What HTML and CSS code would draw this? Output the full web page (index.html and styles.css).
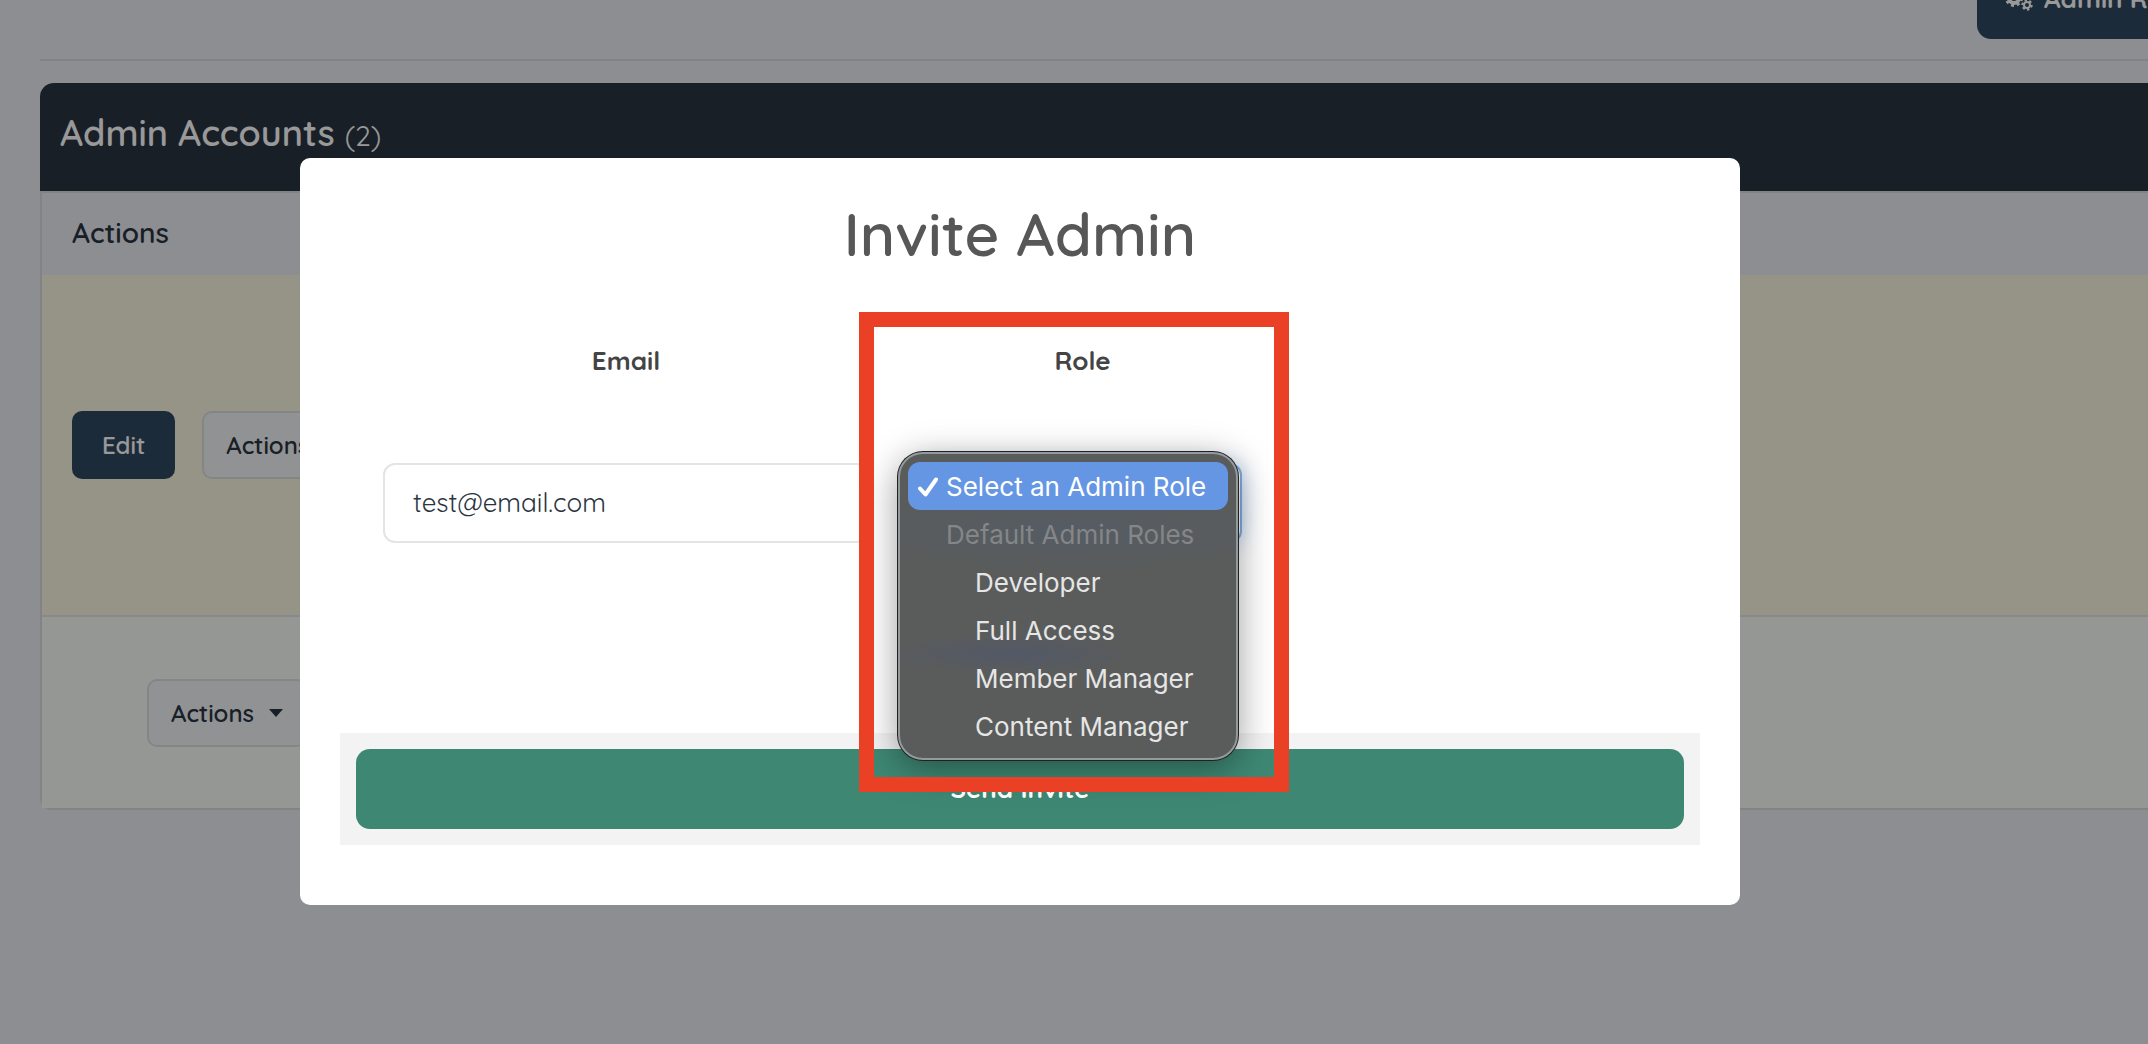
FILE: index.html
```html
<!DOCTYPE html>
<html lang="en">
<head>
<meta charset="utf-8">
<title>Admin Accounts</title>
<link rel="stylesheet" href="styles.css">
</head>
<body>
<div class="page">
  <header class="topbar">
    <button class="btn-roles" type="button">
      <svg class="icon-cogs" viewBox="0 0 30 30" aria-hidden="true">
        <circle class="gear" cx="9" cy="15" r="5"/>
        <circle class="teeth" cx="9" cy="15" r="7.500" pathLength="16"/>
        <circle class="gear-small" cx="22" cy="22" r="3"/>
        <circle class="teeth-small" cx="22" cy="22" r="4.700" pathLength="12"/>
        <circle class="gear-small" cx="22" cy="8" r="3"/>
        <circle class="teeth-small" cx="22" cy="8" r="4.700" pathLength="12"/>
      </svg>
      <span>Admin Roles</span>
    </button>
  </header>

  <section class="panel">
    <h1 class="panel-title">Admin Accounts <small>(2)</small></h1>
    <table class="accounts">
      <thead>
        <tr><th scope="col">Actions</th></tr>
      </thead>
      <tbody>
        <tr class="row-current">
          <td>
            <div class="row-actions">
              <button class="btn btn-primary" type="button">Edit</button>
              <button class="btn btn-light" type="button">Actions <span class="caret"></span></button>
            </div>
          </td>
        </tr>
        <tr class="row-other">
          <td>
            <div class="row-actions row-actions-indent">
              <button class="btn btn-light" type="button">Actions <span class="caret"></span></button>
            </div>
          </td>
        </tr>
      </tbody>
    </table>
  </section>
</div>

<div class="overlay">
  <form class="modal" role="dialog" aria-labelledby="invite-title">
    <h2 class="modal-title" id="invite-title">Invite Admin</h2>
    <div class="fields">
      <div class="field">
        <label for="email">Email</label>
        <input class="control" id="email" type="email" value="test@email.com">
      </div>
      <div class="field">
        <label for="role">Role</label>
        <select class="control control-focus" id="role">
          <option>Select an Admin Role</option>
          <optgroup label="Default Admin Roles">
            <option>Developer</option>
            <option>Full Access</option>
            <option>Member Manager</option>
            <option>Content Manager</option>
          </optgroup>
        </select>
        <ul class="menu">
          <li class="menu-item menu-selected">
            <svg class="check" viewBox="0 0 20 20" aria-hidden="true"><path d="M2 11.500 7.500 17.500 18 2.500"/></svg>
            Select an Admin Role
          </li>
          <li class="menu-item menu-group">Default Admin Roles</li>
          <li class="menu-item menu-child">Developer</li>
          <li class="menu-item menu-child">Full Access</li>
          <li class="menu-item menu-child">Member Manager</li>
          <li class="menu-item menu-child">Content Manager</li>
        </ul>
        <div class="highlight"></div>
      </div>
    </div>
    <div class="modal-actions">
      <button class="btn-send" type="submit">Send Invite</button>
    </div>
  </form>
</div>
</body>
</html>
```
FILE: styles.css
```css
* {
  box-sizing: border-box;
}

body {
  margin: 0;
  min-height: 100vh;
  overflow: hidden;
  background: #ebedf3;
  color: #2a3441;
  font-family: Quicksand, Lato, sans-serif;
}

button,
input,
select {
  font: inherit;
  color: inherit;
}

.page {
  padding-left: 40px;
}

.topbar {
  display: flex;
  align-items: flex-end;
  justify-content: flex-end;
  height: 61px;
  padding-bottom: 20px;
  overflow: hidden;
  border-bottom: 2px solid #d9dbd9;
}

.btn-roles {
  display: flex;
  flex: none;
  align-items: center;
  gap: 9px;
  width: 280px;
  height: 80px;
  margin-right: -109px;
  padding: 0 28px 2px;
  border: 0;
  border-radius: 14px;
  background: #2f4861;
  color: #fff;
  font-size: 26px;
  font-weight: 700;
}

.icon-cogs {
  flex: none;
  width: 30px;
  height: 30px;
  fill: none;
  stroke: #fff;
}

.gear { stroke-width: 4; }
.teeth { stroke-width: 3; stroke-dasharray: 1 1; }
.gear-small { stroke-width: 2; }
.teeth-small { stroke-width: 2; stroke-dasharray: 1 1; }

.panel {
  margin-top: 22px;
}

.panel-title {
  height: 108px;
  margin: 0;
  padding: 0 20px;
  border-radius: 14px 0 0 0;
  background: #2a3441;
  color: #fff;
  font-size: 36px;
  font-weight: 600;
  line-height: 100px;
}

.panel-title small {
  font-size: 28px;
  font-weight: 400;
}

.accounts {
  width: 100%;
  border: 2px solid #d9dbd9;
  border-right: 0;
  border-radius: 0 0 0 12px;
  border-spacing: 0;
}

.accounts th,
.accounts td {
  padding: 0 30px;
  text-align: left;
  vertical-align: middle;
}

.accounts th {
  height: 82px;
  padding-bottom: 4px;
  font-size: 28px;
  font-weight: 600;
}

.row-current td {
  height: 342px;
  border-bottom: 2px solid #e4e4e8;
  background: #faf7df;
}

.row-other td {
  height: 191px;
  background: #f9fcf9;
}

.row-actions {
  display: flex;
  gap: 27px;
}

.row-actions-indent {
  padding-left: 75px;
}

.btn {
  display: flex;
  align-items: center;
  gap: 15px;
  height: 68px;
  border: 2px solid #dddfe0;
  border-radius: 10px;
  font-size: 24px;
  font-weight: 600;
}

.btn-primary {
  padding: 0 28px;
  border-color: #2f4861;
  background: #2f4861;
  color: #fff;
}

.btn-light {
  padding: 0 22px;
  background: #f2f3f6;
}

.caret {
  border: 7px solid transparent;
  border-top: 8px solid #2a3441;
  border-bottom: 0;
}

.overlay {
  position: fixed;
  inset: 0;
  padding: 158px 408px 0 300px;
  background: rgba(0, 0, 0, 0.4);
}

.modal {
  padding: 38px 40px 60px;
  border-radius: 10px;
  background: #fff;
}

.modal-title {
  margin: 0;
  color: #575757;
  font-size: 60px;
  font-weight: 600;
  line-height: 76px;
  text-align: center;
}

.fields {
  display: grid;
  grid-template-columns: 510fr 403fr 385fr;
  margin-top: 70px;
  padding: 0 31px;
}

.field {
  position: relative;
  display: flex;
  flex-direction: column;
  align-items: center;
  gap: 83px;
  height: 391px;
  padding: 0 12px;
}

.field label {
  color: #444;
  font-size: 26px;
  font-weight: 700;
  line-height: 38px;
}

.control {
  width: 100%;
  height: 80px;
  padding: 0 28px 2px;
  border: 2px solid #e4e4e4;
  border-radius: 12px;
  background: #fff;
  font-size: 26px;
}

.control-focus {
  width: 318px;
  border-color: #80b0e4;
  box-shadow: 0 0 20px rgba(70, 140, 230, 0.35);
  appearance: none;
}

.menu {
  position: absolute;
  top: 110px;
  left: 17px;
  width: 340px;
  margin: 0;
  padding: 8px;
  border: 2px solid #939a9c;
  border-radius: 25px;
  background:
    radial-gradient(130px 20px at 110px 200px, rgba(75, 85, 115, 0.5), transparent),
    radial-gradient(240px 40px at 170px 78px, rgba(80, 92, 110, 0.5), transparent),
    #5a5c5b;
  box-shadow: 0 0 0 1px #222, 0 8px 36px rgba(0, 0, 0, 0.4);
  color: #e6e6e6;
  font-family: Inter, sans-serif;
  font-size: 26px;
  line-height: 46px;
  list-style: none;
}

.menu-item {
  display: flex;
  align-items: center;
  padding-top: 2px;
  padding-left: 38px;
  white-space: nowrap;
}

.menu-selected {
  gap: 8px;
  padding-left: 10px;
  border-radius: 12px;
  background: #6596e4;
  color: #fff;
}

.menu-group {
  color: #858687;
}

.menu-child {
  padding-left: 67px;
}

.check {
  width: 20px;
  height: 20px;
  fill: none;
  stroke: #fff;
  stroke-width: 4;
  stroke-linecap: round;
  stroke-linejoin: round;
}

.highlight {
  position: absolute;
  top: -30px;
  left: -22px;
  width: 430px;
  height: 480px;
  border: 15px solid #ea4126;
}

.modal-actions {
  padding: 16px;
  background: #f3f3f3;
}

.btn-send {
  width: 100%;
  height: 80px;
  padding: 0 0 2px;
  border: 0;
  border-radius: 14px;
  background: #3e8873;
  color: #fff;
  font-size: 26px;
  font-weight: 700;
}
```
